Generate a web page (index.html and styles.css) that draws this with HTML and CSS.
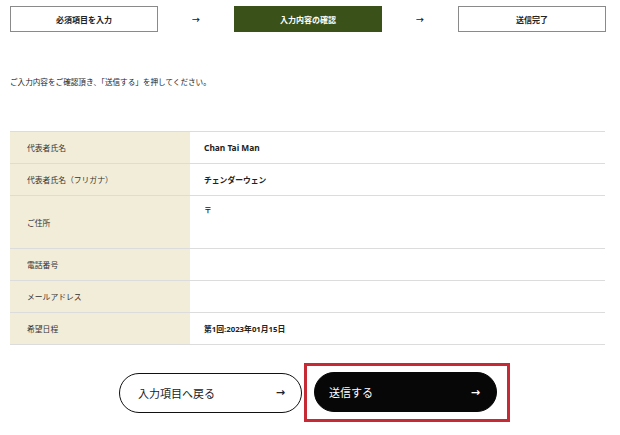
FILE: index.html
```html
<!DOCTYPE html>
<html lang="ja">
<head>
	<meta charset="utf-8">
	<title>入力内容の確認</title>
	<link rel="stylesheet" href="styles.css">
</head>
<body>
	<div class="steps">
		<div class="step">必須項目を入力</div>
		<div class="stepArrow">&#x2192;</div>
		<div class="step current">入力内容の確認</div>
		<div class="stepArrow">&#x2192;</div>
		<div class="step">送信完了</div>
	</div>

	<p class="lead">ご入力内容をご確認頂き､「送信する」を押してください。</p>

	<table class="confirm">
		<tr>
			<th>代表者氏名</th>
			<td class="latin">Chan Tai Man</td>
		</tr>
		<tr>
			<th>代表者氏名（フリガナ）</th>
			<td>チェンダーウェン</td>
		</tr>
		<tr class="tall">
			<th>ご住所</th>
			<td class="top">〒</td>
		</tr>
		<tr>
			<th>電話番号</th>
			<td></td>
		</tr>
		<tr>
			<th>メールアドレス</th>
			<td></td>
		</tr>
		<tr>
			<th>希望日程</th>
			<td>第1回:2023年01月15日</td>
		</tr>
	</table>

	<div class="actions">
		<button class="btn back">入力項目へ戻る<span class="arr">&#x2192;</span></button>
		<div class="highlight">
			<button class="btn send">送信する<span class="arr">&#x2192;</span></button>
		</div>
	</div>
</body>
</html>
```

FILE: styles.css
```css
body {
	margin: 0;
	padding: 0;
	background: #fff;
	color: #222;
	font-family: "Noto Sans", "Noto Sans CJK JP", sans-serif;
}

.steps {
	display: grid;
	grid-template-columns: 148px 1fr 148px 1fr 148px;
	width: 596px;
	margin: 6px 0 0 10px;
	align-items: center;
}
.step {
	height: 24px;
	border: 1px solid #8a8a8a;
	display: flex;
	align-items: center;
	justify-content: center;
	font-size: 8px;
	font-weight: bold;
	color: #222;
}
.step.current {
	background: #3a5119;
	border-color: #3a5119;
	color: #fff;
}
.stepArrow {
	text-align: center;
	font-size: 8px;
	font-weight: bold;
}

.lead {
	margin: 44px 0 0 10px;
	font-size: 7.6px;
	color: #222;
}

.confirm {
	margin: 44px 0 0 10px;
	width: 595px;
	border-collapse: collapse;
	border-top: 1px solid #dcdcdc;
}
.confirm th,
.confirm td {
	height: 31px;
	border-bottom: 1px solid #dcdcdc;
	font-size: 7.8px;
	text-align: left;
	padding: 0;
}
.confirm th {
	width: 163px;
	padding-left: 17px;
	background: #f2edd9;
	font-weight: normal;
	color: #333;
}
.confirm td {
	padding-left: 14px;
	font-weight: bold;
	color: #222;
}
.confirm td.latin {
	font-size: 8.4px;
}
.confirm tr.tall th {
	height: 52px;
}
.confirm td.top {
	height: 44px;
	vertical-align: top;
	padding-top: 8px;
}

.actions {
	display: flex;
	align-items: center;
	gap: 2px;
	margin: 18px 0 0 119px;
}
.btn {
	display: flex;
	align-items: center;
	justify-content: space-between;
	width: 183px;
	height: 40px;
	border-radius: 20px;
	padding: 0 16px 0 18px;
	box-sizing: border-box;
	font-family: "Liberation Serif", "Noto Sans CJK JP", serif;
	font-size: 11px;
	cursor: pointer;
}
.btn.back {
	background: #fff;
	border: 1.5px solid #111;
	color: #222;
}
.btn.send {
	background: #070707;
	border: 1.5px solid #070707;
	color: #fff;
	padding-left: 14px;
}
.arr {
	font-family: "DejaVu Sans", sans-serif;
	font-size: 11px;
	font-weight: bold;
}
.highlight {
	border: 3px solid #c52a35;
	padding: 6px 10px 7px 7px;
}
```
